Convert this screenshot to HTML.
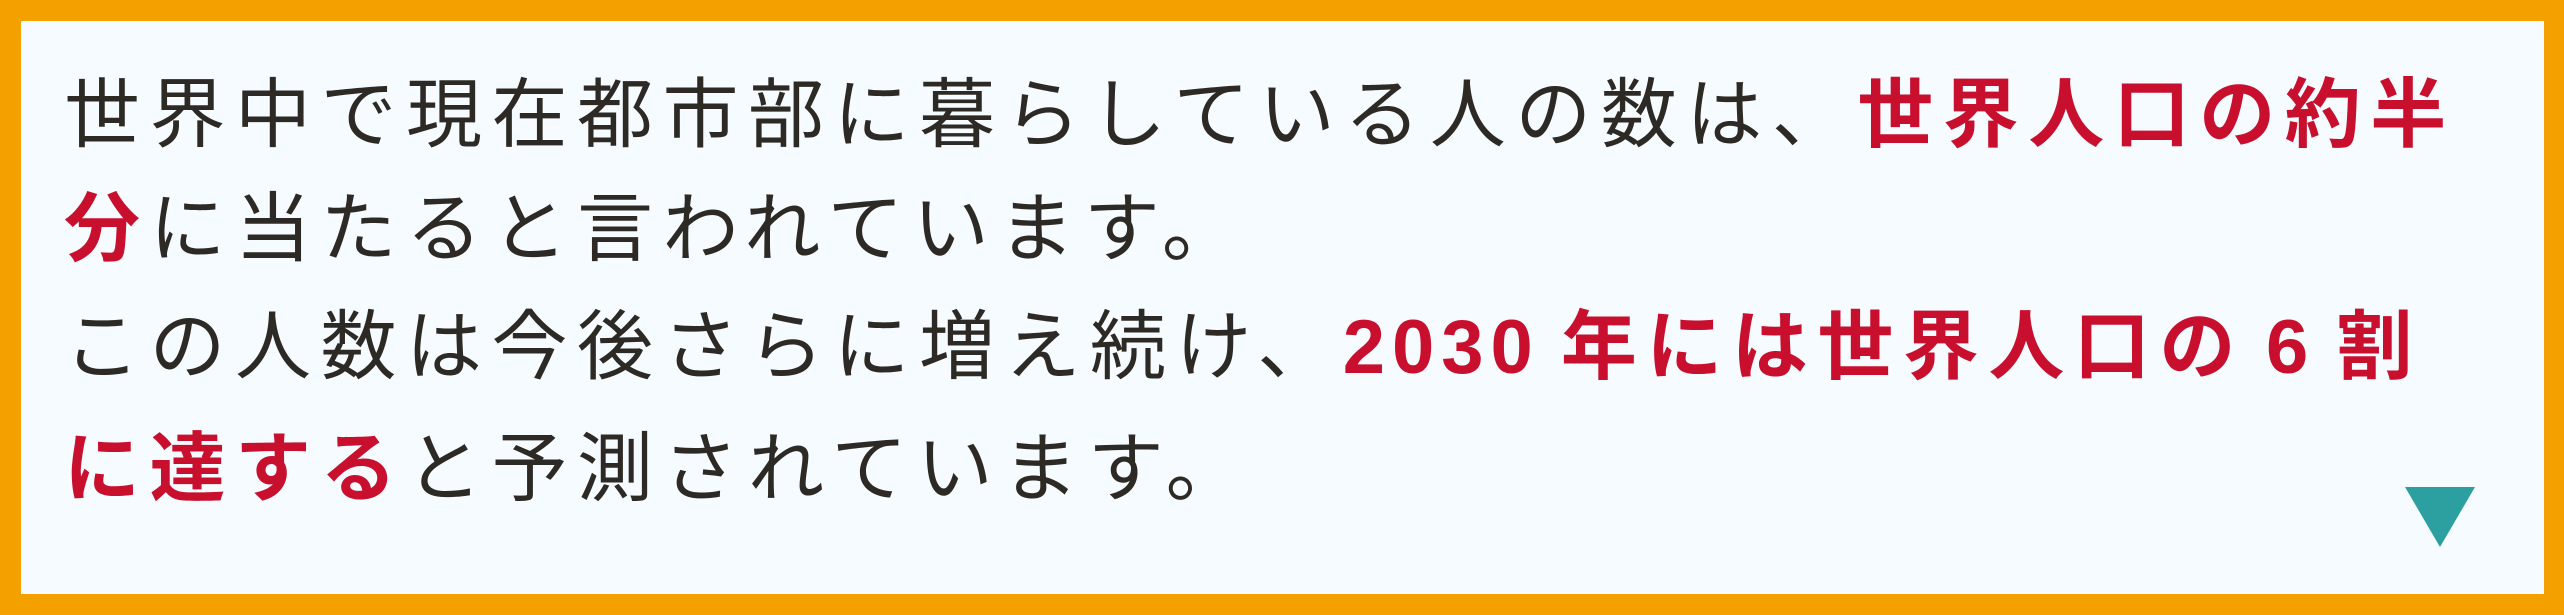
<!DOCTYPE html>
<html><head><meta charset="utf-8"><style>
html,body{margin:0;padding:0}
body{width:2564px;height:615px;background:#f4a100;position:relative;overflow:hidden}
.box{position:absolute;left:21px;top:21px;width:2523px;height:573px;background:#f5fbfe}
.l{position:absolute;left:64px;white-space:nowrap;font-family:"Liberation Sans","Noto Sans CJK JP",sans-serif;font-size:76px;letter-spacing:9.5px;color:#2d2a25;line-height:119px;height:119px}
.r{color:#c8102e;font-weight:700}
.d{letter-spacing:7px}
.s{letter-spacing:0}
.tri{position:absolute;left:2405px;top:487px;width:0;height:0;border-left:35px solid transparent;border-right:35px solid transparent;border-top:60px solid #2c9fa0}
</style></head><body>
<div class="box"></div>
<div class="l" style="top:56px">世界中で現在都市部に暮らしている人の数は、<span class="r">世界人口の約半</span></div>
<div class="l" style="top:170px"><span class="r">分</span>に当たると言われています。</div>
<div class="l" style="top:288px">この人数は今後さらに増え続け、<span class="r"><span class="d">2030</span><span class="s"> </span>年には世界人口の<span class="s"> </span><span class="d">6</span><span class="s"> </span>割</span></div>
<div class="l" style="top:410px"><span class="r">に達する</span>と予測されています。</div>
<div class="tri"></div>
</body></html>
